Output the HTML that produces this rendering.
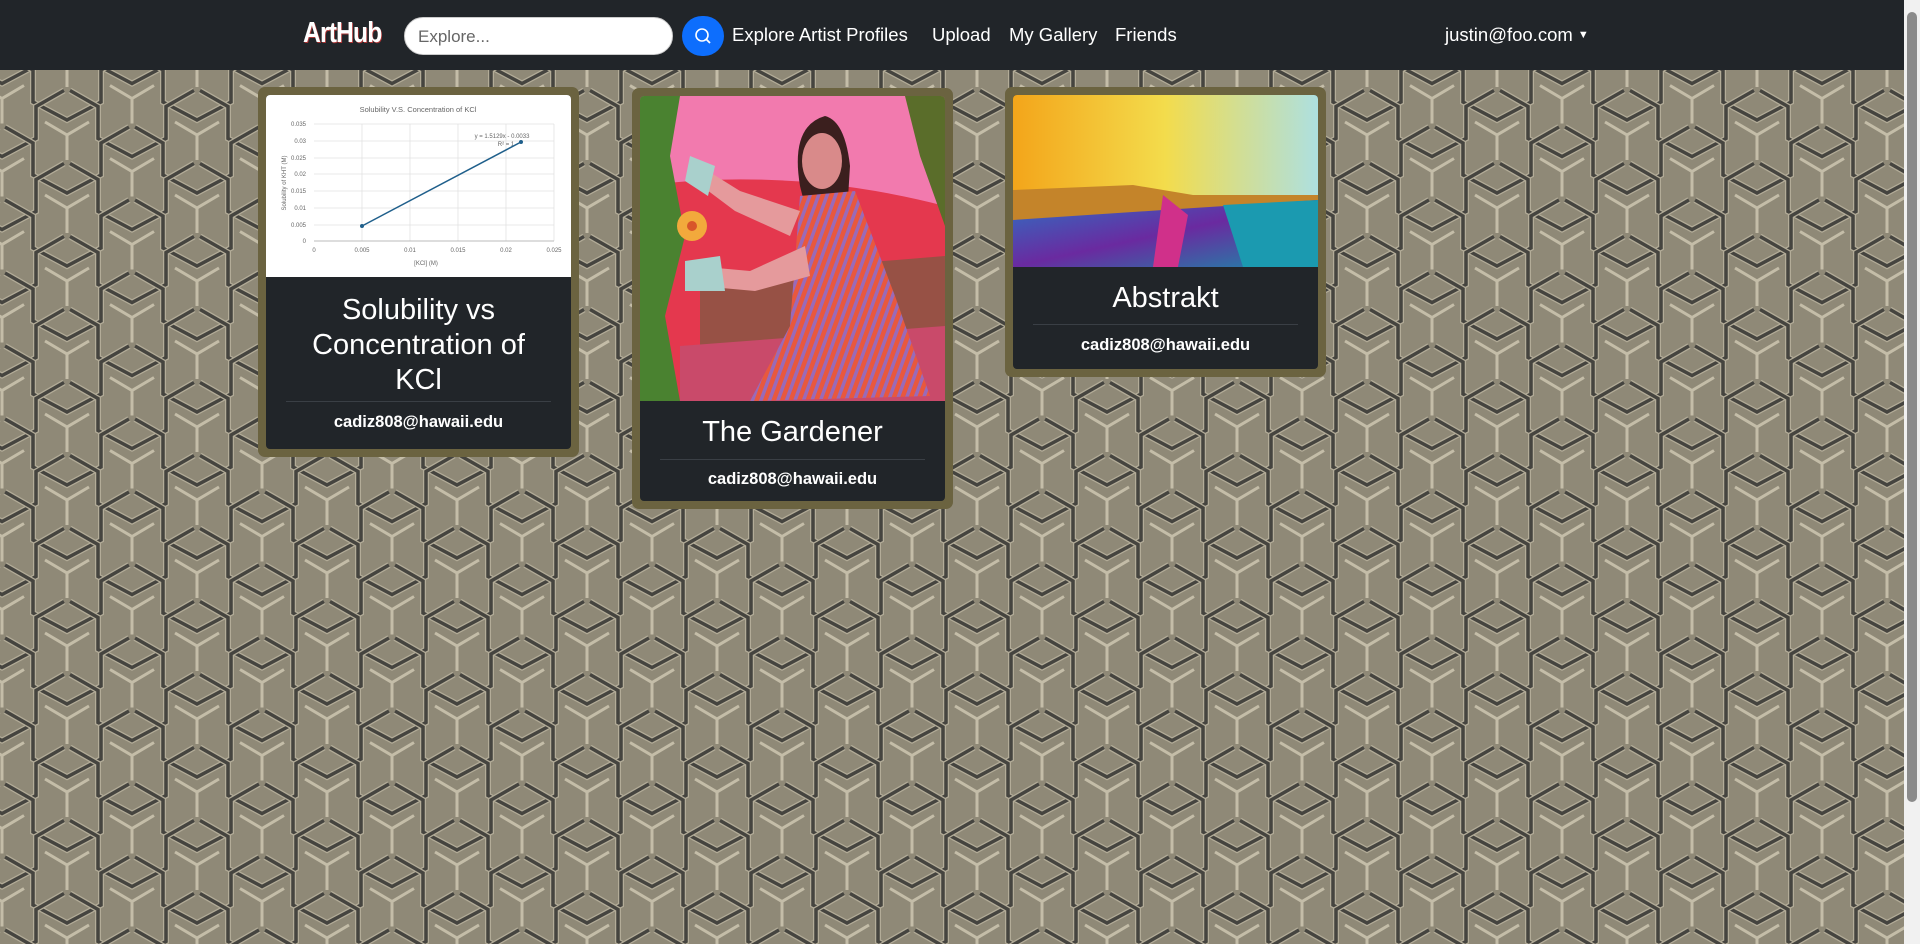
<!DOCTYPE html>
<html><head><meta charset="utf-8"><style>
*{box-sizing:border-box;margin:0;padding:0}
html,body{width:1920px;height:944px;overflow:hidden;font-family:"Liberation Sans",sans-serif}
#bg{position:absolute;left:0;top:70px;width:1904px;height:874px}
nav{position:absolute;left:0;top:0;width:1904px;height:70px;background:#212529;color:#fff}
.logo{position:absolute;left:303px;top:17px;font-size:29px;font-weight:bold;letter-spacing:-1px;transform:scaleX(0.85);transform-origin:left;text-shadow:1px 1px 0 #a33}
.search{position:absolute;left:404px;top:17px;width:269px;height:38px;border-radius:19px;background:#fff;border:1px solid #ccc;color:#666;font-size:17px;padding:9px 13px}
.btn{position:absolute;left:682px;top:16px;width:42px;height:40px;border-radius:20px;background:#0d6efd}
.lk{position:absolute;top:24px;font-size:18.5px;color:#fff}
.sb{position:absolute;left:1904px;top:0;width:16px;height:944px;background:#f1f1f1}
.sb div{position:absolute;left:3px;top:12px;width:10px;height:790px;background:#8b8b8b;border-radius:5px}
.card{position:absolute;background:#6b6340;border-radius:7px;padding:8px}
.in{background:#212529;border-radius:4px;overflow:hidden;height:100%;color:#fff;text-align:center}
.t{font-size:29px;line-height:35px;padding:0 26px}
.hr{height:1px;background:#3a3f45;margin:0 20px}
.em{font-size:16.5px;font-weight:bold;line-height:20px}
</style></head><body>
<svg id="bg" xmlns="http://www.w3.org/2000/svg">
<defs>
<g id="Y">
<path d="M-62,-8 L-34,8 L-34,40 L0,58 L34,40 L34,8 L62,-8" fill="none" stroke="#b3ac98" stroke-width="6"/>
<path d="M-62,-8 L-34,8 L-34,40 L0,58 L34,40 L34,8 L62,-8" fill="none" stroke="#45443f" stroke-width="3.5"/>
<path d="M-22,-13 L0,0 L22,-13 M0,0 L0,25" fill="none" stroke="#c4bda8" stroke-width="3"/>
</g>
<pattern id="p" width="130" height="73" patternUnits="userSpaceOnUse" x="-63" y="-8">
<rect width="130" height="73" fill="#8f8977"/>
<use href="#Y" x="0" y="-73"/><use href="#Y" x="130" y="-73"/>
<use href="#Y" x="65" y="-36.5"/>
<use href="#Y" x="0" y="0"/><use href="#Y" x="130" y="0"/>
<use href="#Y" x="65" y="36.5"/>
<use href="#Y" x="0" y="73"/><use href="#Y" x="130" y="73"/>
</pattern>
</defs>
<rect width="1904" height="874" fill="url(#p)"/>
</svg>
<nav>
<div class="logo">ArtHub</div>
<div class="search">Explore...</div>
<div class="btn"><svg width="42" height="40"><circle cx="20" cy="19" r="6" fill="none" stroke="#fff" stroke-width="1.6"/><path d="M24.5,23.5 L28,27" stroke="#fff" stroke-width="1.8"/></svg></div>
<div class="lk" style="left:732px">Explore Artist Profiles</div>
<div class="lk" style="left:932px">Upload</div>
<div class="lk" style="left:1009px">My Gallery</div>
<div class="lk" style="left:1115px">Friends</div>
<div class="lk" style="left:1445px">justin@foo.com <span style="font-size:11px;vertical-align:3px">▼</span></div>
</nav>
<div class="sb"><div></div></div>

<div class="card" style="left:258px;top:87px;width:321px;height:370px"><div class="in">
<svg width="305" height="182" style="display:block;background:#fff" font-family="Liberation Sans" font-size="6" fill="#666">
<text x="152" y="17" text-anchor="middle" font-size="7.5">Solubility V.S. Concentration of KCl</text>
<g stroke="#e2e2e2" stroke-width="0.8">
<line x1="48" y1="29" x2="288" y2="29"/><line x1="48" y1="46" x2="288" y2="46"/><line x1="48" y1="63" x2="288" y2="63"/><line x1="48" y1="79" x2="288" y2="79"/><line x1="48" y1="96" x2="288" y2="96"/><line x1="48" y1="113" x2="288" y2="113"/><line x1="48" y1="130" x2="288" y2="130"/>
<line x1="96" y1="29" x2="96" y2="146"/><line x1="144" y1="29" x2="144" y2="146"/><line x1="192" y1="29" x2="192" y2="146"/><line x1="240" y1="29" x2="240" y2="146"/><line x1="288" y1="29" x2="288" y2="146"/>
</g>
<line x1="48" y1="146" x2="288" y2="146" stroke="#bbb"/>
<text x="40" y="31" text-anchor="end">0.035</text><text x="40" y="48" text-anchor="end">0.03</text><text x="40" y="65" text-anchor="end">0.025</text><text x="40" y="81" text-anchor="end">0.02</text><text x="40" y="98" text-anchor="end">0.015</text><text x="40" y="115" text-anchor="end">0.01</text><text x="40" y="132" text-anchor="end">0.005</text><text x="40" y="148" text-anchor="end">0</text>
<text x="48" y="157" text-anchor="middle">0</text><text x="96" y="157" text-anchor="middle">0.005</text><text x="144" y="157" text-anchor="middle">0.01</text><text x="192" y="157" text-anchor="middle">0.015</text><text x="240" y="157" text-anchor="middle">0.02</text><text x="288" y="157" text-anchor="middle">0.025</text>
<text x="160" y="170" text-anchor="middle">[KCl] (M)</text>
<text x="0" y="0" transform="translate(20,88) rotate(-90)" text-anchor="middle">Solubility of KHT (M)</text>
<text x="236" y="43" text-anchor="middle">y = 1.5129x - 0.0033</text><text x="240" y="51" text-anchor="middle">R² = 1</text>
<line x1="96" y1="131" x2="255" y2="47" stroke="#1f5f8b" stroke-width="1.5"/>
<circle cx="96" cy="131" r="2" fill="#1f5f8b"/><circle cx="255" cy="47" r="2" fill="#1f5f8b"/>
</svg>
<div style="padding-top:16px" class="t">Solubility vs Concentration of KCl</div>
<div class="hr" style="margin-top:3px"></div>
<div class="em" style="margin-top:10px">cadiz808@hawaii.edu</div>
</div></div>

<div class="card" style="left:632px;top:88px;width:321px;height:421px"><div class="in">
<svg width="305" height="305" style="display:block">
<defs><pattern id="st" width="8" height="8" patternUnits="userSpaceOnUse" patternTransform="rotate(20)"><rect width="8" height="8" fill="#e8583e"/><rect width="3.5" height="8" fill="#9a6ab8"/></pattern></defs>
<rect width="305" height="305" fill="#f27aae"/>
<path d="M0,90 Q150,70 305,110 L305,305 L0,305Z" fill="#e4384e"/>
<path d="M60,180 L305,160 L305,305 L60,305Z" fill="#4a6a3c" opacity="0.5"/>
<path d="M40,250 L305,230 L305,305 L40,305Z" fill="#c94a6a"/>
<path d="M0,0 L40,0 L30,60 L45,140 L25,220 L40,305 L0,305Z" fill="#4a8230"/>
<path d="M265,0 L305,0 L305,130 L280,60Z" fill="#5a6d2a"/>
<path d="M185,20 Q150,30 160,90 L175,150 L205,150 L210,70 Q205,25 185,20Z" fill="#3b1f1e"/>
<ellipse cx="182" cy="65" rx="20" ry="28" fill="#d98a8a"/>
<path d="M160,100 L215,95 L255,200 L290,300 L110,305 L150,230Z" fill="url(#st)"/>
<path d="M160,115 L100,95 L60,70 L55,85 L95,115 L150,140Z" fill="#e59a9c"/>
<path d="M165,150 L110,175 L55,170 L60,190 L115,195 L170,180Z" fill="#e59a9c"/>
<path d="M50,60 L75,70 L68,100 L45,85Z" fill="#a9d0cc"/>
<path d="M45,165 L80,160 L85,195 L45,195Z" fill="#a9d0cc"/>
<circle cx="52" cy="130" r="15" fill="#f2a93c"/><circle cx="52" cy="130" r="5" fill="#d8552a"/>
</svg>
<div style="padding-top:14px" class="t">The Gardener</div>
<div class="hr" style="margin-top:9px"></div>
<div class="em" style="margin-top:9px">cadiz808@hawaii.edu</div>
</div></div>

<div class="card" style="left:1005px;top:87px;width:321px;height:290px"><div class="in">
<svg width="305" height="172" style="display:block">
<defs>
<linearGradient id="a1" x1="0" y1="0" x2="1" y2="0"><stop offset="0" stop-color="#f3a51a"/><stop offset="0.5" stop-color="#f3dc4c"/><stop offset="1" stop-color="#aee0e0"/></linearGradient>
<linearGradient id="a2" x1="0" y1="0" x2="1" y2="1"><stop offset="0" stop-color="#2f6fc2"/><stop offset="0.5" stop-color="#6a2aa0"/><stop offset="1" stop-color="#1a8aa8"/></linearGradient>
</defs>
<rect width="305" height="172" fill="url(#a1)"/>
<path d="M0,95 L120,90 L180,100 L305,100 L305,172 L0,172Z" fill="#c4842a"/>
<path d="M0,125 L150,115 L305,105 L305,172 L0,172Z" fill="url(#a2)"/>
<path d="M150,100 L175,120 L165,172 L140,172Z" fill="#d0308a"/>
<path d="M210,110 L305,105 L305,172 L230,172Z" fill="#1b9ab0"/>
</svg>
<div style="padding-top:14px" class="t">Abstrakt</div>
<div class="hr" style="margin-top:8px"></div>
<div class="em" style="margin-top:10px">cadiz808@hawaii.edu</div>
</div></div>
</body></html>
